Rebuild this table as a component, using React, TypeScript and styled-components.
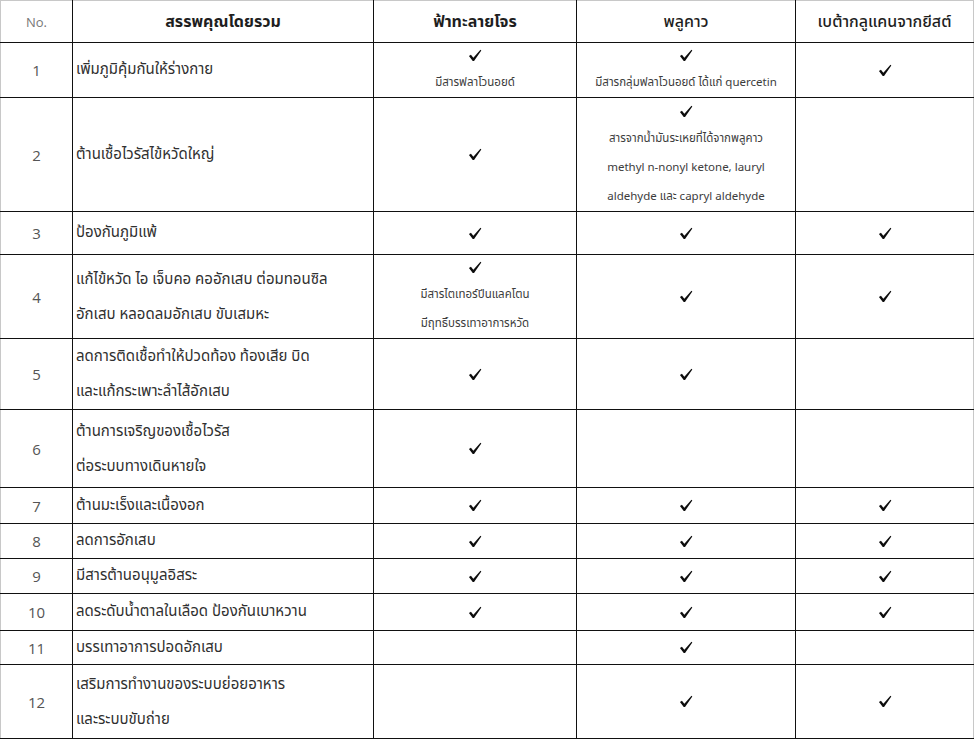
import React from "react";
import styled, { createGlobalStyle } from "styled-components";

const GlobalStyle = createGlobalStyle`
  html, body {
    margin: 0;
    padding: 0;
    background: #ffffff;
  }
  body {
    font-family: "Tahoma", "Leelawadee UI", "Noto Sans Thai", "Noto Sans Thai UI", "Open Sans", "Noto Sans", sans-serif;
    color: #333;
  }
`;

const Table = styled.table`
  width: 973px;
  border-collapse: collapse;
  table-layout: fixed;
  border-top: 1px solid #c8c8c8;
  border-left: 1px solid #c8c8c8;
  border-right: 1px solid #c8c8c8;
`;

const Row = styled.tr<{ $h: number }>`
  height: ${(p) => p.$h}px;
`;

const Cell = styled.td`
  border-left: 1px solid #111;
  border-bottom: 1px solid #111;
  padding: 0;
  vertical-align: middle;
  &:first-child {
    border-left: none;
  }
`;

const HeadCell = styled(Cell).attrs({ as: "th" })<{ $bold?: boolean }>`
  text-align: center;
  font-size: 16px;
  font-weight: ${(p) => (p.$bold ? 700 : 500)};
  color: #1e1e1e;
`;

const NoHead = styled(HeadCell)`
  font-family: "Open Sans", "Noto Sans", sans-serif;
  font-size: 13px;
  font-weight: 400;
  color: #777;
`;

const NumCell = styled(Cell)`
  text-align: center;
  font-family: "Open Sans", "Noto Sans", sans-serif;
  font-size: 15px;
  color: #555;
`;

const DescCell = styled(Cell)<{ $multi: boolean }>`
  padding-left: 3px;
  font-size: 15px;
  line-height: ${(p) => (p.$multi ? 35 : 24)}px;
  color: #303030;
`;

const MarkCell = styled(Cell)`
  text-align: center;
`;

const MarkStack = styled.div`
  display: flex;
  flex-direction: column;
  align-items: center;
`;

const MarkLine = styled.div`
  height: 25px;
  display: flex;
  align-items: center;
  justify-content: center;
`;

const Note = styled.div`
  font-size: 11.5px;
  line-height: 29px;
  color: #3c3c3c;
  white-space: nowrap;
`;

const CheckSvg = styled.svg`
  width: 14px;
  height: 13px;
  display: block;
`;

const Check = () => (
  <CheckSvg viewBox="0 0 16 15">
    <path
      d="M1 8.2 L3.3 6.6 L6.1 10 L14.3 0.8 L15.3 1.6 L6.9 13.8 L5.4 13.8 Z"
      fill="#0d0d0d"
    />
  </CheckSvg>
);

type Mark = null | { notes?: string[] };

interface RowData {
  no: number;
  h: number;
  desc: string[];
  marks: [Mark, Mark, Mark];
}

const Y: Mark = {};

const rows: RowData[] = [
  {
    no: 1,
    h: 55,
    desc: ["เพิ่มภูมิคุ้มกันให้ร่างกาย"],
    marks: [
      { notes: ["มีสารฟลาโวนอยด์"] },
      { notes: ["มีสารกลุ่มฟลาโวนอยด์ ได้แก่ quercetin"] },
      Y,
    ],
  },
  {
    no: 2,
    h: 114,
    desc: ["ต้านเชื้อไวรัสไข้หวัดใหญ่"],
    marks: [
      Y,
      {
        notes: [
          "สารจากน้ำมันระเหยที่ได้จากพลูคาว",
          "methyl n-nonyl ketone, lauryl",
          "aldehyde และ capryl aldehyde",
        ],
      },
      null,
    ],
  },
  { no: 3, h: 43, desc: ["ป้องกันภูมิแพ้"], marks: [Y, Y, Y] },
  {
    no: 4,
    h: 84,
    desc: ["แก้ไข้หวัด  ไอ เจ็บคอ คออักเสบ ต่อมทอนซิล", "อักเสบ หลอดลมอักเสบ ขับเสมหะ"],
    marks: [{ notes: ["มีสารไตเทอร์ปีนแลคโตน", "มีฤทธิ์บรรเทาอาการหวัด"] }, Y, Y],
  },
  {
    no: 5,
    h: 71,
    desc: ["ลดการติดเชื้อทำให้ปวดท้อง ท้องเสีย บิด", "และแก้กระเพาะลำไส้อักเสบ"],
    marks: [Y, Y, null],
  },
  {
    no: 6,
    h: 78,
    desc: ["ต้านการเจริญของเชื้อไวรัส", "ต่อระบบทางเดินหายใจ"],
    marks: [Y, null, null],
  },
  { no: 7, h: 36, desc: ["ต้านมะเร็งและเนื้องอก"], marks: [Y, Y, Y] },
  { no: 8, h: 35, desc: ["ลดการอักเสบ"], marks: [Y, Y, Y] },
  { no: 9, h: 35, desc: ["มีสารต้านอนุมูลอิสระ"], marks: [Y, Y, Y] },
  { no: 10, h: 37, desc: ["ลดระดับน้ำตาลในเลือด ป้องกันเบาหวาน"], marks: [Y, Y, Y] },
  { no: 11, h: 34, desc: ["บรรเทาอาการปอดอักเสบ"], marks: [null, Y, null] },
  {
    no: 12,
    h: 74,
    desc: ["เสริมการทำงานของระบบย่อยอาหาร", "และระบบขับถ่าย"],
    marks: [null, Y, Y],
  },
];

const MarkContent = ({ mark }: { mark: Mark }) => {
  if (!mark) return null;
  if (!mark.notes) {
    return (
      <MarkStack>
        <Check />
      </MarkStack>
    );
  }
  return (
    <MarkStack>
      <MarkLine>
        <Check />
      </MarkLine>
      {mark.notes.map((n, i) => (
        <Note key={i}>{n}</Note>
      ))}
    </MarkStack>
  );
};

export default function App() {
  return (
    <>
      <GlobalStyle />
      <Table>
        <colgroup>
          <col style={{ width: 72 }} />
          <col style={{ width: 301 }} />
          <col style={{ width: 203 }} />
          <col style={{ width: 219 }} />
          <col style={{ width: 178 }} />
        </colgroup>
        <thead>
          <Row $h={42}>
            <NoHead>No.</NoHead>
            <HeadCell $bold>สรรพคุณโดยรวม</HeadCell>
            <HeadCell $bold>ฟ้าทะลายโจร</HeadCell>
            <HeadCell>พลูคาว</HeadCell>
            <HeadCell>เบต้ากลูแคนจากยีสต์</HeadCell>
          </Row>
        </thead>
        <tbody>
          {rows.map((r) => (
            <Row key={r.no} $h={r.h}>
              <NumCell>{r.no}</NumCell>
              <DescCell $multi={r.desc.length > 1}>
                {r.desc.map((d, i) => (
                  <div key={i}>{d}</div>
                ))}
              </DescCell>
              {r.marks.map((m, i) => (
                <MarkCell key={i}>
                  <MarkContent mark={m} />
                </MarkCell>
              ))}
            </Row>
          ))}
        </tbody>
      </Table>
    </>
  );
}
